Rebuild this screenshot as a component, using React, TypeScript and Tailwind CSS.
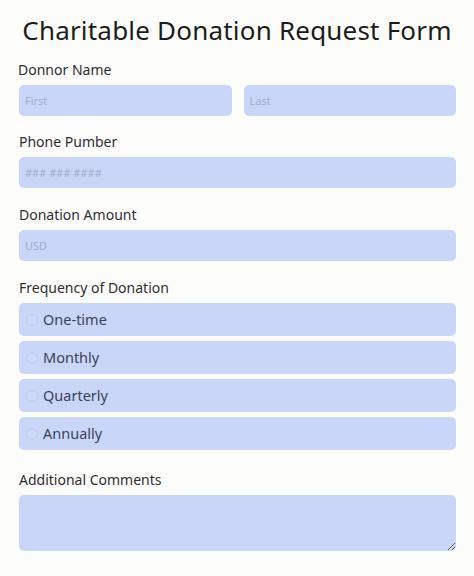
import React from "react";

const labelCls = "block text-[14px] leading-[20px] text-[#2f2f2f] mb-[5px]";
const inputCls =
  "w-full h-[31px] rounded-[5px] bg-[#cad6f8] px-[6px] text-[11px] text-[#333] placeholder:text-[#a3acc8] outline-none";

export default function App() {
  const options = ["One-time", "Monthly", "Quarterly", "Annually"];
  return (
    <div
      className="min-h-[576px] bg-[#fcfcfb] px-[18px] pt-[14px]"
      style={{ fontFamily: "'Noto Sans', 'Open Sans', sans-serif" }}
    >
      <h1 className="text-center text-[26px] leading-[32px] text-[#1c1c1c] tracking-[0.2px]">
        Charitable Donation Request Form
      </h1>

      <div className="mt-[14px]">
        <label className={labelCls}>Donnor Name</label>
        <div className="grid grid-cols-2 gap-[12px] pl-[1px]">
          <input className={inputCls} placeholder="First" />
          <input className={inputCls} placeholder="Last" />
        </div>
      </div>

      <div className="mt-[16px] pl-[1px]">
        <label className={labelCls}>Phone Pumber</label>
        <input className={inputCls} placeholder="### ### ####" />
      </div>

      <div className="mt-[17px] pl-[1px]">
        <label className={labelCls}>Donation Amount</label>
        <input className={inputCls} placeholder="USD" />
      </div>

      <div className="mt-[17px] pl-[1px]">
        <label className={labelCls}>Frequency of Donation</label>
        <div className="flex flex-col gap-[5px]">
          {options.map((o) => (
            <label
              key={o}
              className="flex h-[33px] items-center gap-[5px] rounded-[5px] bg-[#cad6f8] px-[7px] text-[14.5px] text-[#3b4256]"
            >
              <span className="h-[12px] w-[12px] rounded-full border border-[#bccaf2] bg-[#cdd8f8]" />
              {o}
            </label>
          ))}
        </div>
      </div>

      <div className="mt-[20px] pl-[1px]">
        <label className={labelCls}>Additional Comments</label>
        <textarea className="block h-[56px] w-full resize-y rounded-[5px] bg-[#cad6f8] outline-none" />
      </div>
    </div>
  );
}
